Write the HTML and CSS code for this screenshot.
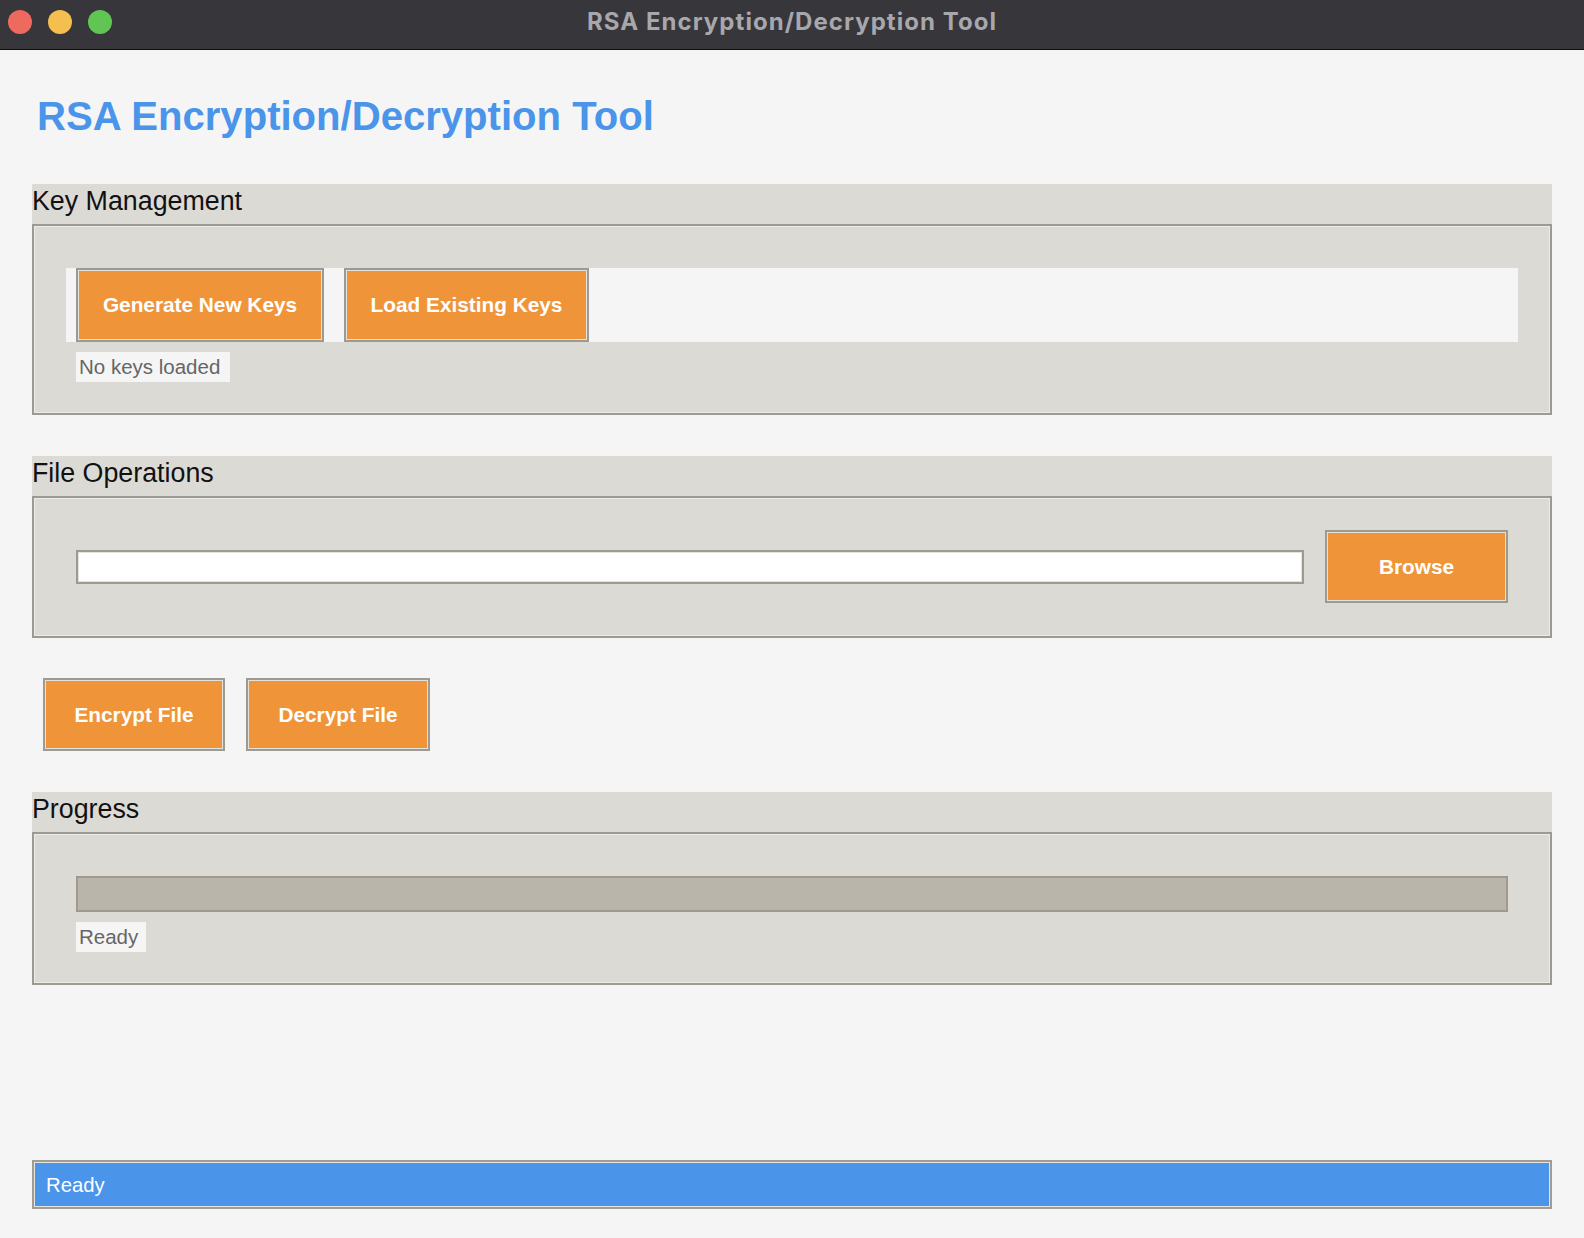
FILE: index.html
```html
<!DOCTYPE html>
<html>
<head>
<meta charset="utf-8">
<title>RSA Encryption/Decryption Tool</title>
<link rel="stylesheet" href="styles.css">
</head>
<body>
<div class="window">
  <header class="titlebar">
    <div class="lights">
      <span class="light light-red"></span>
      <span class="light light-yellow"></span>
      <span class="light light-green"></span>
    </div>
    <div class="title">RSA Encryption/Decryption Tool</div>
    <div class="titlebar-spacer"></div>
  </header>
  <main class="content">
    <h1 class="heading">RSA Encryption/Decryption Tool</h1>

    <section class="group group-key">
      <div class="group-label">Key Management</div>
      <div class="group-box">
        <div class="key-row">
          <button class="btn btn-generate">Generate New Keys</button>
          <button class="btn btn-load">Load Existing Keys</button>
        </div>
        <div class="info-label label-keys">No keys loaded</div>
      </div>
    </section>

    <section class="group group-file">
      <div class="group-label">File Operations</div>
      <div class="group-box">
        <div class="file-row">
          <input class="entry" type="text" value="">
          <button class="btn btn-browse">Browse</button>
        </div>
      </div>
    </section>

    <div class="action-row">
      <button class="btn btn-encrypt">Encrypt File</button>
      <button class="btn btn-decrypt">Decrypt File</button>
    </div>

    <section class="group group-progress">
      <div class="group-label">Progress</div>
      <div class="group-box">
        <div class="progress"><div class="progress-fill" style="width:0%"></div></div>
        <div class="info-label label-ready">Ready</div>
      </div>
    </section>

    <div class="statusbar">Ready</div>
  </main>
</div>
</body>
</html>
```

FILE: styles.css
```css
* {
  box-sizing: border-box;
}

html, body {
  margin: 0;
  padding: 0;
  background: #f5f5f5;
  overflow: hidden;
}

.window {
  width: 1584px;
  height: 1238px;
  display: flex;
  flex-direction: column;
  font-family: "Liberation Sans", Arial, sans-serif;
}

/* ---------- title bar ---------- */
.titlebar {
  height: 50px;
  background: #37363b;
  border-bottom: 1px solid #0d0d0d;
  display: grid;
  grid-template-columns: 1fr auto 1fr;
  align-items: center;
  padding-bottom: 6px;
}

.lights {
  display: flex;
  gap: 16px;
  padding-left: 8px;
}

.light {
  width: 24px;
  height: 24px;
  border-radius: 50%;
  display: block;
}

.light-red { background: #ee6a5e; }
.light-yellow { background: #f5bf4f; }
.light-green { background: #61c554; }

.title {
  font-family: "Inter", "Open Sans", sans-serif;
  font-weight: 700;
  font-size: 24px;
  line-height: 24px;
  letter-spacing: 1.05px;
  color: #a8a7ab;
  white-space: nowrap;
}

/* ---------- content ---------- */
.content {
  flex: 1;
  display: flex;
  flex-direction: column;
  padding: 0 32px 29px;
}

.heading {
  margin: 43px 0 0;
  height: 46px;
  line-height: 46px;
  font-size: 40.1px;
  font-weight: 700;
  color: #4a94ea;
  padding-left: 5px;
}

.group-key {
  margin-top: 45px;
}

.group-file {
  margin-top: 41px;
}

.group-progress {
  margin-top: 41px;
}

.group-label {
  height: 40px;
  line-height: 34px;
  font-size: 26.8px;
  color: #111;
  background: #dcdad5;
  white-space: nowrap;
}

.group-box {
  background: #dcdad5;
  border: 2px solid #9e9a91;
  box-shadow: inset 0 0 0 1px #ecebe6;
  padding: 32px;
}

.group-key .group-box {
  padding-bottom: 31px;
}

.group-file .group-box {
  padding-bottom: 33px;
}

.group-progress .group-box {
  padding-bottom: 31px;
}

/* ---------- buttons ---------- */
.btn {
  height: 73px;
  background: #f0943a;
  border: 2px solid #9e9a91;
  box-shadow: inset 0 0 0 1px #e3e1dc;
  color: #ffffff;
  font-family: "Liberation Sans", Arial, sans-serif;
  font-weight: 700;
  font-size: 20.8px;
  padding: 0;
  margin: 0;
  text-align: center;
  flex: none;
}

.key-row .btn {
  height: 74px;
}

.btn-generate { width: 248px; }
.btn-load { width: 245px; }
.btn-browse { width: 183px; }
.btn-encrypt { width: 182px; }
.btn-decrypt { width: 184px; }

.key-row {
  margin-top: 10px;
  height: 74px;
  background: #f5f5f5;
  display: flex;
  gap: 20px;
  padding-left: 10px;
}

.info-label {
  display: inline-block;
  align-self: flex-start;
  height: 30px;
  line-height: 30px;
  font-size: 20.5px;
  color: #666666;
  background: #f5f5f5;
  padding-left: 3px;
  margin: 10px 0 0 10px;
}

.label-keys { width: 154px; }
.label-ready { width: 70px; }

/* ---------- file row ---------- */
.file-row {
  display: flex;
  align-items: center;
  gap: 21px;
  padding: 0 10px;
}

.entry {
  flex: 1;
  height: 34px;
  background: #ffffff;
  border: 2px solid #9e9a91;
  box-shadow: inset 0 0 0 1px #e4e2dd;
  margin: 0;
  padding: 0 4px;
  font-size: 18px;
  outline: none;
}

/* ---------- action row ---------- */
.action-row {
  margin-top: 40px;
  display: flex;
  gap: 21px;
  padding-left: 11px;
}

/* ---------- progress ---------- */
.group-progress .group-box {
  display: flex;
  flex-direction: column;
}

.progress {
  margin: 10px 10px 0;
  height: 36px;
  background: #bab5ab;
  border: 2px solid #9e9a91;
}

.progress-fill {
  height: 100%;
  background: #4a94ea;
}

/* ---------- status bar ---------- */
.statusbar {
  margin-top: auto;
  height: 49px;
  background: #4a94ea;
  border: 2px solid #a19d96;
  box-shadow: inset 0 0 0 1px #e6e4df;
  color: #ffffff;
  font-size: 20.3px;
  line-height: 47px;
  padding-left: 12px;
}
```
